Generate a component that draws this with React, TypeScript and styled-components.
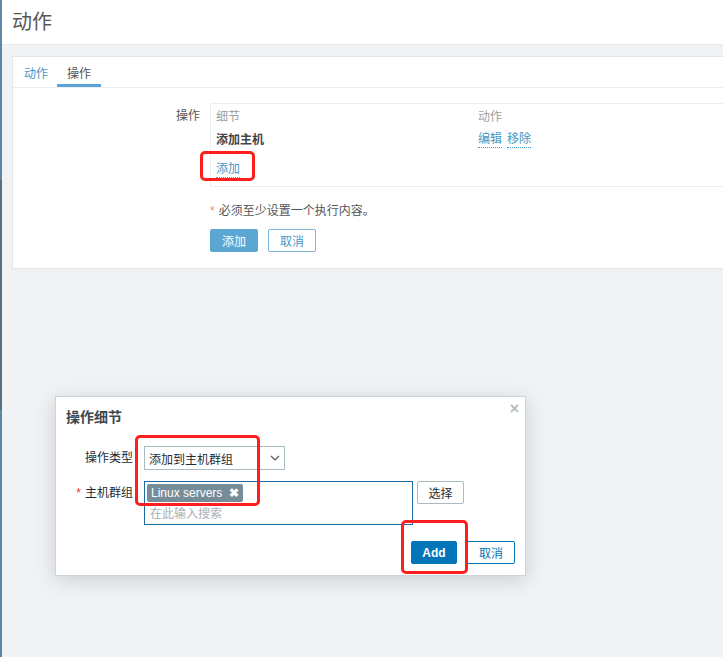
import React from "react";
import styled, { createGlobalStyle } from "styled-components";

const GlobalStyle = createGlobalStyle`
  html, body { margin: 0; padding: 0; }
  body {
    background: #f1f2f4;
    font-family: "Liberation Sans", "Noto Sans CJK SC", sans-serif;
    font-size: 12px;
    overflow: hidden;
  }
  #root { width: 723px; height: 657px; overflow: hidden; }
`;

const Page = styled.div`
  position: relative;
  display: flex;
  width: 723px;
  height: 657px;
  overflow: hidden;
`;

const SideStrip = styled.div`
  width: 2px;
  flex: none;
  background: linear-gradient(
    to bottom,
    #5f88a5 0px,
    #5f88a5 180px,
    #5d6f7d 180px,
    #5d6f7d 410px,
    #5f88a5 410px
  );
`;

const Main = styled.div`
  flex: 1;
  display: flex;
  flex-direction: column;
  min-width: 0;
`;

const Header = styled.header`
  height: 44px;
  background: #ffffff;
  border-bottom: 1px solid #e6e9ec;
  display: flex;
  align-items: center;
  padding-left: 10px;
`;

const Title = styled.h1`
  margin: 0;
  font-size: 20px;
  font-weight: normal;
  color: #575757;
  line-height: 24px;
`;

const Content = styled.div`
  padding: 11px 0 0 10px;
`;

const Card = styled.section`
  position: relative;
  width: 740px;
  background: #ffffff;
  border: 1px solid #e3e6e9;
  padding-bottom: 16px;
`;

const TabBar = styled.nav`
  display: flex;
  height: 30px;
  border-bottom: 1px solid #ebeef0;
  padding-left: 1px;
`;

const Tab = styled.div<{ $active?: boolean }>`
  display: flex;
  align-items: center;
  padding: 0 10px;
  margin-right: -1px;
  color: ${(p) => (p.$active ? "#555555" : "#4796c4")};
  border-bottom: 3px solid ${(p) => (p.$active ? "#5ba3d0" : "transparent")};
  padding-top: 3px;
`;

const FormGrid = styled.div`
  display: grid;
  grid-template-columns: 187px 1fr;
  column-gap: 10px;
  padding-top: 15px;
`;

const Label = styled.div<{ $pt?: number }>`
  text-align: right;
  color: #555555;
  padding-top: ${(p) => p.$pt ?? 5}px;
`;

const OpsTable = styled.div`
  border: 1px solid #ebeef0;
  border-right: none;
  display: grid;
  grid-template-columns: 262px 1fr;
  grid-auto-rows: auto;
  padding: 4px 0 7px 5px;
`;

const HeadCell = styled.div`
  color: #a0a0a0;
  height: 18px;
  line-height: 18px;
`;

const Cell = styled.div<{ $bold?: boolean }>`
  margin-top: 5px;
  height: 18px;
  line-height: 18px;
  color: #444444;
  font-weight: ${(p) => (p.$bold ? "bold" : "normal")};
  display: flex;
  gap: 5px;
`;

const DotLink = styled.span`
  color: #4796c4;
  border-bottom: 1px dotted #4796c4;
  line-height: 14px;
  height: 15px;
  align-self: flex-start;
  margin-top: 1px;
`;

const AddRow = styled.div`
  grid-column: 1 / span 2;
  margin-top: 12px;
  height: 18px;
  display: flex;
`;

const Note = styled.div`
  grid-column: 2;
  margin-top: 15px;
  color: #555555;
  height: 18px;
  line-height: 18px;
`;

const Star = styled.span<{ $pale?: boolean }>`
  color: ${(p) => (p.$pale ? "#f08a7a" : "#e33734")};
  margin-right: 4px;
`;

const ButtonRow = styled.div`
  grid-column: 2;
  margin-top: 9px;
  display: flex;
  gap: 10px;
`;

const Button = styled.button<{ $variant: "primary" | "outline" | "plain"; $w: number; $tone?: "light" | "dark" }>`
  box-sizing: border-box;
  width: ${(p) => p.$w}px;
  height: 23px;
  padding: 0;
  font-family: inherit;
  font-size: 12px;
  border-radius: 2px;
  cursor: pointer;
  ${(p) => {
    const blue = p.$tone === "light" ? "#5ba6d3" : "#0275b8";
    if (p.$variant === "primary")
      return `background: ${blue}; border: 1px solid ${blue}; color: #fff; font-weight: ${p.$tone === "light" ? "normal" : "bold"};`;
    if (p.$variant === "outline")
      return `background: #fff; border: 1px solid ${p.$tone === "light" ? "#7fb7da" : "#0275b8"}; color: ${p.$tone === "light" ? "#4796c4" : "#0275b8"};`;
    return `background: #fff; border: 1px solid #acbbc2; color: #1f2c33;`;
  }}
`;

const RedFrame = styled.div<{ $l: number; $t: number; $w: number; $h: number }>`
  position: absolute;
  left: ${(p) => p.$l}px;
  top: ${(p) => p.$t}px;
  width: ${(p) => p.$w}px;
  height: ${(p) => p.$h}px;
  box-sizing: border-box;
  border: 3px solid #ff1e1e;
  border-radius: 5px;
  pointer-events: none;
`;

/* Dialog */
const Dialog = styled.div`
  position: absolute;
  left: 55px;
  top: 396px;
  width: 471px;
  height: 180px;
  box-sizing: border-box;
  background: #ffffff;
  border: 1px solid #cdd5da;
  box-shadow: 0 4px 18px rgba(60, 80, 95, 0.22);
  display: flex;
  flex-direction: column;
  padding: 10px 10px 11px 10px;
`;

const DialogTitle = styled.h2`
  margin: 0;
  font-size: 14px;
  font-weight: bold;
  color: #3b4751;
  line-height: 20px;
`;

const Close = styled.span`
  position: absolute;
  right: 6px;
  top: 3px;
  color: #b5bcc1;
  font-size: 16px;
  font-weight: bold;
`;

const DialogForm = styled.div`
  display: grid;
  grid-template-columns: 67px auto;
  column-gap: 11px;
  row-gap: 11px;
  margin-top: 19px;
  align-items: start;
`;

const DLabel = styled.div`
  text-align: right;
  color: #1f2c33;
  height: 24px;
  line-height: 24px;
  white-space: nowrap;
`;

const Select = styled.div`
  box-sizing: border-box;
  width: 141px;
  height: 24px;
  border: 1px solid #acbbc2;
  display: flex;
  align-items: center;
  justify-content: space-between;
  padding: 0 4px 0 4px;
  color: #1f2c33;
`;

const MultiRow = styled.div`
  display: flex;
  gap: 4px;
  align-items: flex-start;
`;

const MultiBox = styled.div`
  box-sizing: border-box;
  width: 269px;
  height: 44px;
  border: 1px solid #1d6ba5;
  padding: 2px 2px 0 2px;
  display: flex;
  flex-direction: column;
`;

const Tag = styled.span`
  align-self: flex-start;
  display: inline-flex;
  align-items: center;
  gap: 7px;
  height: 18px;
  padding: 0 4px;
  background: #768d99;
  color: #ffffff;
  border-radius: 2px;
`;

const TagX = styled.span`
  font-size: 12px;
  font-weight: bold;
`;

const Placeholder = styled.div`
  color: #a8b0b5;
  margin-top: 3px;
  padding-left: 3px;
  line-height: 18px;
`;

const Footer = styled.div`
  margin-top: auto;
  display: flex;
  justify-content: flex-end;
  gap: 10px;
`;

export default function App() {
  return (
    <>
      <GlobalStyle />
      <Page>
        <SideStrip />
        <Main>
          <Header>
            <Title>动作</Title>
          </Header>
          <Content>
            <Card>
              <TabBar>
                <Tab>动作</Tab>
                <Tab $active>操作</Tab>
              </TabBar>
              <FormGrid>
                <Label $pt={3}>操作</Label>
                <OpsTable>
                  <HeadCell>细节</HeadCell>
                  <HeadCell>动作</HeadCell>
                  <Cell $bold>添加主机</Cell>
                  <Cell>
                    <DotLink>编辑</DotLink>
                    <DotLink>移除</DotLink>
                  </Cell>
                  <AddRow>
                    <DotLink>添加</DotLink>
                  </AddRow>
                </OpsTable>
                <Note>
                  <Star $pale>*</Star>必须至少设置一个执行内容。
                </Note>
                <ButtonRow>
                  <Button $variant="primary" $tone="light" $w={48}>添加</Button>
                  <Button $variant="outline" $tone="light" $w={48}>取消</Button>
                </ButtonRow>
              </FormGrid>
              <RedFrame $l={187} $t={94} $w={55} $h={30} />
            </Card>
          </Content>
        </Main>

        <Dialog>
          <DialogTitle>操作细节</DialogTitle>
          <Close>×</Close>
          <DialogForm>
            <DLabel>操作类型</DLabel>
            <Select>
              <span>添加到主机群组</span>
              <svg width="10" height="6" viewBox="0 0 10 6">
                <polyline points="1,1 5,5 9,1" fill="none" stroke="#555" strokeWidth="1.2" />
              </svg>
            </Select>
            <DLabel>
              <Star>*</Star>主机群组
            </DLabel>
            <MultiRow>
              <MultiBox>
                <Tag>
                  Linux servers<TagX>✖</TagX>
                </Tag>
                <Placeholder>在此输入搜索</Placeholder>
              </MultiBox>
              <Button $variant="plain" $w={47}>选择</Button>
            </MultiRow>
          </DialogForm>
          <Footer>
            <Button $variant="primary" $w={46}>Add</Button>
            <Button $variant="outline" $w={48}>取消</Button>
          </Footer>
          <RedFrame $l={79} $t={38} $w={125} $h={71} />
          <RedFrame $l={345} $t={123} $w={67} $h={54} />
        </Dialog>
      </Page>
    </>
  );
}
